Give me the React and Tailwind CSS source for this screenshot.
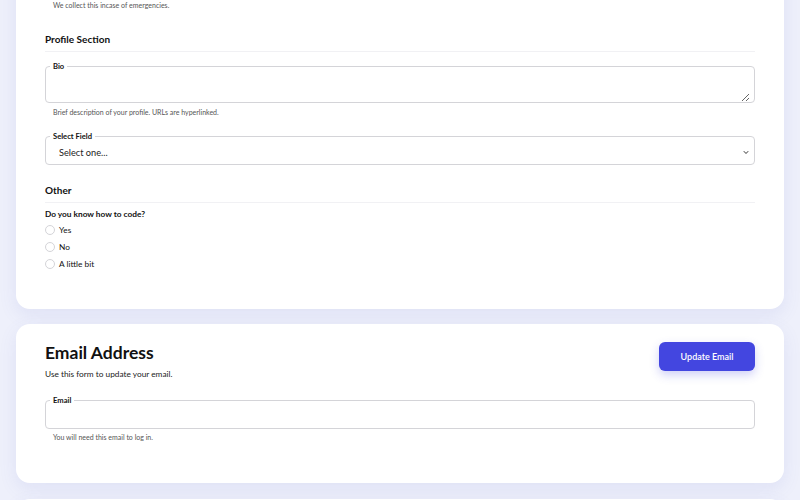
import { useState } from 'react';

function Field({ label, children, className = '' }) {
  return (
    <fieldset className={`border border-[#d4d4d8] rounded-[4px] px-[4px] m-0 min-w-0 ${className}`}>
      <legend className="px-[3px] text-[7.6px] leading-[10px] font-bold text-[#111]">{label}</legend>
      {children}
    </fieldset>
  );
}

function Helper({ children, className = '' }) {
  return <p className={`pl-[8px] text-[7px] leading-[10px] text-[#555] ${className}`}>{children}</p>;
}

function SectionTitle({ children, className = '' }) {
  return (
    <h3 className={`text-[10px] leading-[15px] font-bold text-[#111] pb-[4px] border-b border-[#f1f1f4] ${className}`}>
      {children}
    </h3>
  );
}

function Radio({ name, value, label, checked, onChange }) {
  return (
    <label className="flex items-center gap-[4px] h-[12px] cursor-pointer">
      <input
        type="radio"
        name={name}
        value={value}
        checked={checked}
        onChange={onChange}
        className="appearance-none w-[10px] h-[10px] rounded-full border border-[#d4d4d8] bg-white checked:border-[3px] checked:border-[#4346e0]"
      />
      <span className="text-[8.3px] leading-[12px] text-[#111]">{label}</span>
    </label>
  );
}

export default function App() {
  const [code, setCode] = useState('');
  const [field, setField] = useState('');

  return (
    <div
      className="min-h-screen overflow-hidden bg-[#eef0fb] px-[16px] pb-[40px]"
      style={{ fontFamily: 'Lato, "Noto Sans", sans-serif' }}
    >
      {/* Profile card (top cut off) */}
      <div className="-mt-[38px] bg-white rounded-[14px] shadow-[0_6px_18px_rgba(90,100,200,0.10)] px-[29px] pt-[13px] pb-[39px]">
        {/* phone field, scrolled past */}
        <div className="border border-[#d4d4d8] rounded-[4px] px-[4px]">
          <input type="tel" aria-label="Phone number" className="block w-full h-[22px] outline-none bg-transparent" />
        </div>
        <Helper className="mt-[1px]">We collect this incase of emergencies.</Helper>

        <SectionTitle className="mt-[22px]">Profile Section</SectionTitle>

        <Field label="Bio" className="mt-[9px]">
          <textarea className="block w-full h-[31px] resize-y outline-none bg-transparent text-[9px]" />
        </Field>
        <Helper className="mt-[4px]">Brief description of your profile. URLs are hyperlinked.</Helper>

        <Field label="Select Field" className="mt-[14px]">
          <div className="relative">
            <select
              value={field}
              onChange={(e) => setField(e.target.value)}
              className="appearance-none block w-full h-[23px] pl-[9px] pr-[20px] text-[9.2px] text-[#222] outline-none bg-transparent"
            >
              <option value="">Select one...</option>
              <option value="fe">Frontend</option>
              <option value="be">Backend</option>
            </select>
            <svg
              className="pointer-events-none absolute right-[1px] top-[9px]"
              width="6"
              height="5"
              viewBox="0 0 6 5"
              fill="none"
            >
              <path d="M0.8 1.2L3 3.5L5.2 1.2" stroke="#333" strokeWidth="1" />
            </svg>
          </div>
        </Field>

        <SectionTitle className="mt-[18px]">Other</SectionTitle>

        <p className="mt-[5px] text-[8.3px] leading-[12px] font-bold text-[#111]">Do you know how to code?</p>
        <div className="mt-[4px] flex flex-col gap-[5px]">
          {[
            ['yes', 'Yes'],
            ['no', 'No'],
            ['bit', 'A little bit'],
          ].map(([v, l]) => (
            <Radio key={v} name="code" value={v} label={l} checked={code === v} onChange={() => setCode(v)} />
          ))}
        </div>
      </div>

      {/* Email card */}
      <div className="mt-[15px] bg-white rounded-[14px] shadow-[0_6px_18px_rgba(90,100,200,0.10)] px-[29px] pt-[18px] pb-[41px]">
        <div className="flex items-start justify-between">
          <div>
            <h2 className="text-[17.5px] leading-[21px] font-bold text-[#111]">Email Address</h2>
            <p className="mt-[5px] text-[8.3px] leading-[12px] text-[#222]">Use this form to update your email.</p>
          </div>
          <button className="w-[96px] h-[29px] rounded-[6px] bg-[#4346e0] text-white text-[9px] font-semibold shadow-[0_4px_10px_rgba(67,70,224,0.25)]">
            Update Email
          </button>
        </div>

        <Field label="Email" className="mt-[15px]">
          <input type="email" className="block w-full h-[23px] outline-none bg-transparent text-[9px]" />
        </Field>
        <Helper className="mt-[3px]">You will need this email to log in.</Helper>
      </div>

      {/* Next card (cut off) */}
      <div className="mt-[16px] h-[120px] bg-white rounded-[14px] shadow-[0_6px_18px_rgba(90,100,200,0.10)]" />
    </div>
  );
}
